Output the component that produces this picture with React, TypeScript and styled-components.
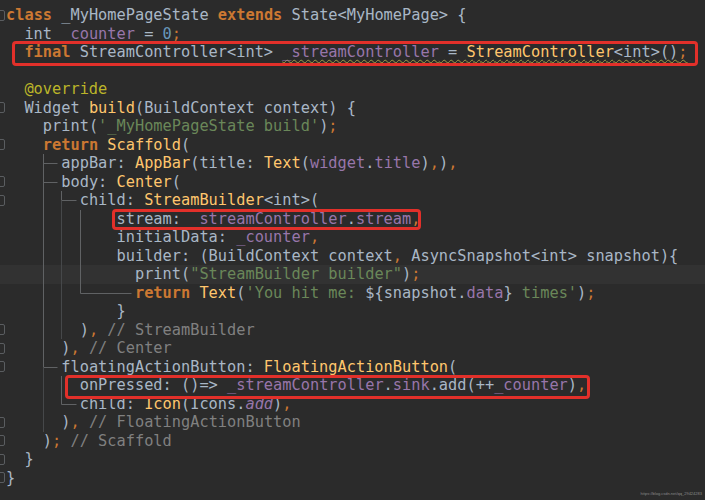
import React from 'react'
import styled, { createGlobalStyle } from 'styled-components'

const CH = 9.21
const LH = 18.5
const TOP = 6
const LEFT = 6

const colX = (c: number) => Math.round(LEFT + c * CH) + 0.5
const midY = (n: number) => Math.round(TOP + (n - 0.5) * LH) + 0.5
const topY = (n: number) => Math.round(TOP + (n - 1) * LH)
const botY = (n: number) => Math.round(TOP + n * LH)

const foldLines = [1, 6, 8, 10, 11, 18, 19, 20, 23, 24, 25, 26]

const App = () => {
  const line = (n: number, indent: number, children?: React.ReactNode) => (
    <Line key={n} $current={n === 15}>
      <FoldCell>{foldLines.includes(n) && <FoldMark />}</FoldCell>
      <Code $indent={indent}>{children}</Code>
    </Line>
  )

  return (
    <>
      <GlobalStyle />
      <Editor>
        <Guides width="705" height="500">
          <path
            d={`M${colX(4)} ${botY(8)} V${midY(20)} H${colX(6) - 4}
                M${colX(4)} ${midY(9)} H${colX(6) - 4}
                M${colX(4)} ${midY(10)} H${colX(6) - 4}
                M${colX(6)} ${botY(10)} V${midY(11)} H${colX(8) - 4}
                M${colX(8)} ${topY(12)} V${midY(16)} H${colX(14) - 4}
                M${colX(6)} ${botY(20)} V${midY(22)} H${colX(8) - 4}`}
            stroke="#606264"
            fill="none"
          />
          <path
            d={`M${colX(6)} ${midY(11)} V${botY(18)}
                M${colX(4)} ${midY(20)} V${botY(23)}`}
            stroke="#46484a"
            fill="none"
          />
        </Guides>

        {line(1, 0, <>
          <Kw>class</Kw> _MyHomePageState <Kw>extends</Kw> State&lt;MyHomePage&gt; {'{'}
        </>)}
        {line(2, 2, <>
          int <Fld>_counter</Fld> = <Num>0</Num><Pn>;</Pn>
        </>)}
        {line(3, 2,
          <Boxed $t={2} $b={4} $l={12} $r={10}>
            <Kw>final</Kw> StreamController&lt;int&gt;{' '}
            <Squiggle>
              <Fld>_streamController</Fld> = <Fn>StreamController</Fn>&lt;int&gt;()<Pn>;</Pn>
            </Squiggle>
          </Boxed>
        )}
        {line(4, 0)}
        {line(5, 2, <Ann>@override</Ann>)}
        {line(6, 2, <>
          Widget <Fn>build</Fn>(BuildContext context) {'{'}
        </>)}
        {line(7, 4, <>
          print(<Str>'_MyHomePageState build'</Str>)<Pn>;</Pn>
        </>)}
        {line(8, 4, <>
          <Kw>return</Kw> <Fn>Scaffold</Fn>(
        </>)}
        {line(9, 6, <>
          appBar: <Fn>AppBar</Fn>(title: <Fn>Text</Fn>(<Fld>widget</Fld>.<Fld>title</Fld>)<Pn>,</Pn>)<Pn>,</Pn>
        </>)}
        {line(10, 6, <>
          body: <Fn>Center</Fn>(
        </>)}
        {line(11, 8, <>
          child: <Fn>StreamBuilder</Fn>&lt;int&gt;(
        </>)}
        {line(12, 12,
          <Boxed $t={1} $b={2} $l={5} $r={1}>
            stream: <Fld>_streamController</Fld>.<Fld>stream</Fld><Pn>,</Pn>
          </Boxed>
        )}
        {line(13, 12, <>
          initialData: <Fld>_counter</Fld><Pn>,</Pn>
        </>)}
        {line(14, 12, <>
          builder: (BuildContext context<Pn>,</Pn> AsyncSnapshot&lt;int&gt; snapshot){'{'}
        </>)}
        {line(15, 14, <>
          print(<Str>"StreamBuilder builder"</Str>)<Pn>;</Pn>
        </>)}
        {line(16, 14, <>
          <Kw>return</Kw> <Fn>Text</Fn>(<Str>'You hit me: </Str>${'{'}snapshot.<Fld>data</Fld>{'}'}<Str> times'</Str>)<Pn>;</Pn>
        </>)}
        {line(17, 12, '}')}
        {line(18, 8, <>
          )<Pn>,</Pn> <Cmt>// StreamBuilder</Cmt>
        </>)}
        {line(19, 6, <>
          )<Pn>,</Pn> <Cmt>// Center</Cmt>
        </>)}
        {line(20, 6, <>
          floatingActionButton: <Fn>FloatingActionButton</Fn>(
        </>)}
        {line(21, 8,
          <Boxed $t={1} $b={4} $l={15} $r={4}>
            onPressed: ()=&gt; <Fld>_streamController</Fld>.<Fld>sink</Fld>.add(++<Fld>_counter</Fld>)<Pn>,</Pn>
          </Boxed>
        )}
        {line(22, 8, <>
          child: <Fn>Icon</Fn>(Icons.<FldItalic>add</FldItalic>)<Pn>,</Pn>
        </>)}
        {line(23, 6, <>
          )<Pn>,</Pn> <Cmt>// FloatingActionButton</Cmt>
        </>)}
        {line(24, 4, <>
          )<Pn>;</Pn> <Cmt>// Scaffold</Cmt>
        </>)}
        {line(25, 2, '}')}
        {line(26, 0, '}')}

        <Footer>
          <Watermark>https://blog.csdn.net/qq_29424283</Watermark>
        </Footer>
      </Editor>
    </>
  )
}

export default App

const GlobalStyle = createGlobalStyle`
  html, body {
    margin: 0;
    padding: 0;
    background: #2b2b2b;
  }
`

const Editor = styled.div`
  position: relative;
  width: 705px;
  height: 500px;
  overflow: hidden;
  box-sizing: border-box;
  padding-top: ${TOP}px;
  background: #2b2b2b;
  font-family: 'DejaVu Sans Mono', 'Liberation Mono', monospace;
  font-size: 15.3px;
  color: #a9b7c6;
`

const Guides = styled.svg`
  position: absolute;
  top: 0;
  left: 0;
  pointer-events: none;
`

const Line = styled.div<{ $current?: boolean }>`
  display: flex;
  height: ${LH}px;
  line-height: ${LH}px;
  background: ${(p) => (p.$current ? '#323232' : 'transparent')};
`

const FoldCell = styled.div`
  width: ${LEFT}px;
  flex-shrink: 0;
  overflow: hidden;
  display: flex;
  align-items: center;
`

const FoldMark = styled.span`
  flex-shrink: 0;
  width: 8px;
  height: 9px;
  margin-left: -5px;
  border: 1px solid #5a5d60;
  border-radius: 2px;
`

const Code = styled.div<{ $indent: number }>`
  white-space: pre;
  padding-left: ${(p) => p.$indent}ch;
`

const Kw = styled.span`
  color: #cc7832;
  font-weight: bold;
`

const Pn = styled.span`
  color: #cc7832;
`

const Fn = styled.span`
  color: #ffc66d;
`

const Fld = styled.span`
  color: #9876aa;
`

const FldItalic = styled(Fld)`
  font-style: italic;
`

const Str = styled.span`
  color: #6a8759;
`

const Num = styled.span`
  color: #6897bb;
`

const Cmt = styled.span`
  color: #808080;
`

const Ann = styled.span`
  color: #bbb529;
`

const Squiggle = styled.span`
  text-decoration-line: underline;
  text-decoration-style: wavy;
  text-decoration-color: #a39e45;
  text-decoration-thickness: 1px;
  text-underline-offset: 2px;
`

const Boxed = styled.span<{ $t: number; $b: number; $l: number; $r: number }>`
  position: relative;
  display: inline-block;
  height: ${LH}px;

  &::after {
    content: '';
    position: absolute;
    top: ${(p) => -p.$t}px;
    bottom: ${(p) => -p.$b}px;
    left: ${(p) => -p.$l}px;
    right: ${(p) => -p.$r}px;
    border: 3px solid #e2302a;
    border-radius: 4px;
    pointer-events: none;
  }
`

const Footer = styled.div`
  display: flex;
  justify-content: flex-end;
  padding: 4px 3px 0 0;
`

const Watermark = styled.span`
  font-family: 'Liberation Sans', Arial, sans-serif;
  font-size: 4px;
  line-height: 5px;
  color: #8a8a8a;
`
